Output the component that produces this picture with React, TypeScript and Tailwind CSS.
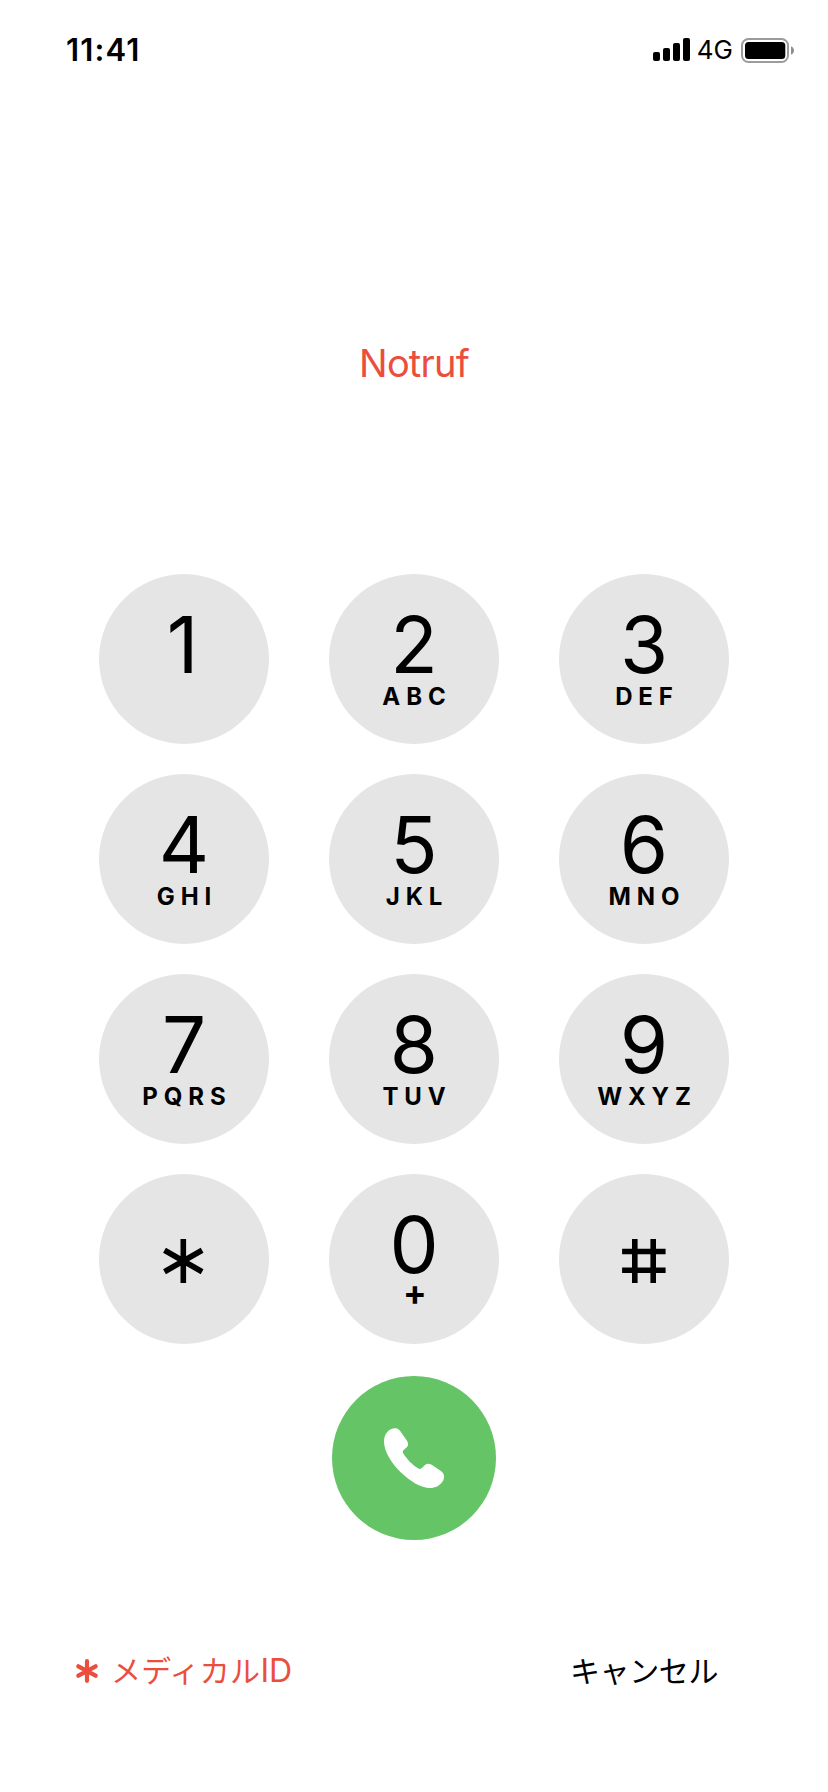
const keys = [
  { digit: "1", letters: "" },
  { digit: "2", letters: "ABC" },
  { digit: "3", letters: "DEF" },
  { digit: "4", letters: "GHI" },
  { digit: "5", letters: "JKL" },
  { digit: "6", letters: "MNO" },
  { digit: "7", letters: "PQRS" },
  { digit: "8", letters: "TUV" },
  { digit: "9", letters: "WXYZ" },
  { digit: "*", letters: "" },
  { digit: "0", letters: "+" },
  { digit: "#", letters: "" },
]

function StarIcon() {
  return (
    <svg className="h-[170px] w-[170px]" viewBox="0 0 170 170" stroke="currentColor" strokeWidth="5.6" aria-hidden="true">
      <path d="M84.3 65v44M65.500 76.200l37.600 21.600M103.100 76.200l-37.600 21.600" />
    </svg>
  )
}

function PoundIcon() {
  return (
    <svg className="h-[170px] w-[170px]" viewBox="0 0 170 170" stroke="currentColor" strokeWidth="5.6" aria-hidden="true">
      <path d="M75.800 65v44M94.200 65v44M63.100 77.500h43.500M63.100 96.200h43.500" />
    </svg>
  )
}

function SignalIcon() {
  return (
    <svg className="h-6 w-[38px]" viewBox="0 0 38 24" fill="currentColor" aria-hidden="true">
      <rect x="0" y="14" width="7" height="9" rx="2" />
      <rect x="10" y="10" width="7" height="13" rx="2" />
      <rect x="20" y="5" width="7" height="18" rx="2" />
      <rect x="30" y="0" width="7" height="23" rx="2" />
    </svg>
  )
}

function BatteryIcon() {
  return (
    <svg className="h-[25px] w-[54px]" viewBox="0 0 54 25" aria-hidden="true">
      <rect x="1" y="1" width="46" height="23" rx="6.5" fill="none" stroke="#9b9b9b" strokeWidth="2" />
      <rect x="4" y="4" width="40.3" height="17" rx="3.5" fill="#000" />
      <path d="M50 8.300c2 .7 3 2.400 3 4.200s-1 3.500-3 4.200z" fill="#8e8e8e" />
    </svg>
  )
}

function PhoneIcon() {
  return (
    <svg className="h-[60px] w-[60px]" viewBox="0 0 60 60" fill="#fff" aria-hidden="true">
      <path d="M3.500 3.700C6.500.3 12.500-1.200 15.800 2.500C18 5.200 20.300 9 22.700 12.300C24.300 14.700 24.700 17 23 19L19.400 22.300Q18.200 23.600 19.200 25.300C22.500 31 29 37.500 34.500 40.600Q36.200 41.500 37.500 40.300L41 37C43 35.300 45.300 35.400 47.700 36.800L57.200 43.200C60.800 45.800 61 50.500 58 54.200C55.500 57.500 51.500 60 46 60C37 60 26.500 53.500 17 44.500C7.500 35.200 0 23.500 0 13.500C0 9.500 1.200 6.200 3.500 3.700Z" />
    </svg>
  )
}

function MedicalIcon() {
  return (
    <svg className="h-6 w-[22px]" viewBox="0 0 22 24" stroke="currentColor" strokeWidth="4.200" strokeLinecap="round" aria-hidden="true">
      <path d="M11 2.200v19.600M2.400 7.300l17.200 9.400M19.600 7.300L2.400 16.700" />
    </svg>
  )
}

function Key({ digit, letters }: { digit: string; letters: string }) {
  if (digit === "*" || digit === "#") {
    return (
      <button aria-label={digit} className="h-[170px] w-[170px] rounded-full bg-[#e5e5e5]">
        {digit === "*" ? <StarIcon /> : <PoundIcon />}
      </button>
    )
  }

  return (
    <button className="flex h-[170px] w-[170px] flex-col items-center rounded-full bg-[#e5e5e5] pt-8">
      <span className={digit === "1" ? "pr-[3px] text-[78px] leading-[78px]" : "text-[78px] leading-[78px]"}>
        {digit}
      </span>
      {letters === "+" ? (
        <span className="-mt-1 pl-[2px] text-[35px] leading-6 font-bold">+</span>
      ) : (
        <span className="mt-px pl-[6px] text-2xl leading-6 font-bold tracking-[5.9px]">{letters}</span>
      )}
    </button>
  )
}

export default function App() {
  return (
    <main className="flex h-[1792px] w-[828px] flex-col bg-white font-['Inter','Noto_Sans_CJK_JP',sans-serif] text-black">
      <header className="flex h-[100px] items-center justify-between pr-[33px] pl-[66px]">
        <span className="text-[31px] leading-8 font-semibold tracking-[1.1px]">11:41</span>
        <div className="flex items-center">
          <SignalIcon />
          <span className="ml-[6px] text-[26px] leading-8">4G</span>
          <div className="ml-2">
            <BatteryIcon />
          </div>
        </div>
      </header>

      <h1 className="mt-[239px] text-center text-[38px] leading-[48px] tracking-[-0.8px] text-[#eb4e3d]">Notruf</h1>

      <div className="mt-[187px] grid grid-cols-[170px_170px_170px] justify-center gap-x-[60px] gap-y-[30px]">
        {keys.map((key) => (
          <Key key={key.digit} {...key} />
        ))}
      </div>

      <button
        aria-label="Call"
        className="mt-8 flex h-[164px] w-[164px] items-center justify-center self-center rounded-full bg-[#65c466]"
      >
        <PhoneIcon />
      </button>

      <footer className="mt-[107px] flex items-center justify-between pr-[110px] pl-[76px] text-[30px] leading-[48px]">
        <button className="flex items-center text-[#eb4e3d]">
          <MedicalIcon />
          <span className="ml-[13px] tracking-[0.3px]">
            メディカル<span className="text-[32px] tracking-normal">ID</span>
          </span>
        </button>
        <button className="tracking-[-0.4px]">キャンセル</button>
      </footer>
    </main>
  )
}
